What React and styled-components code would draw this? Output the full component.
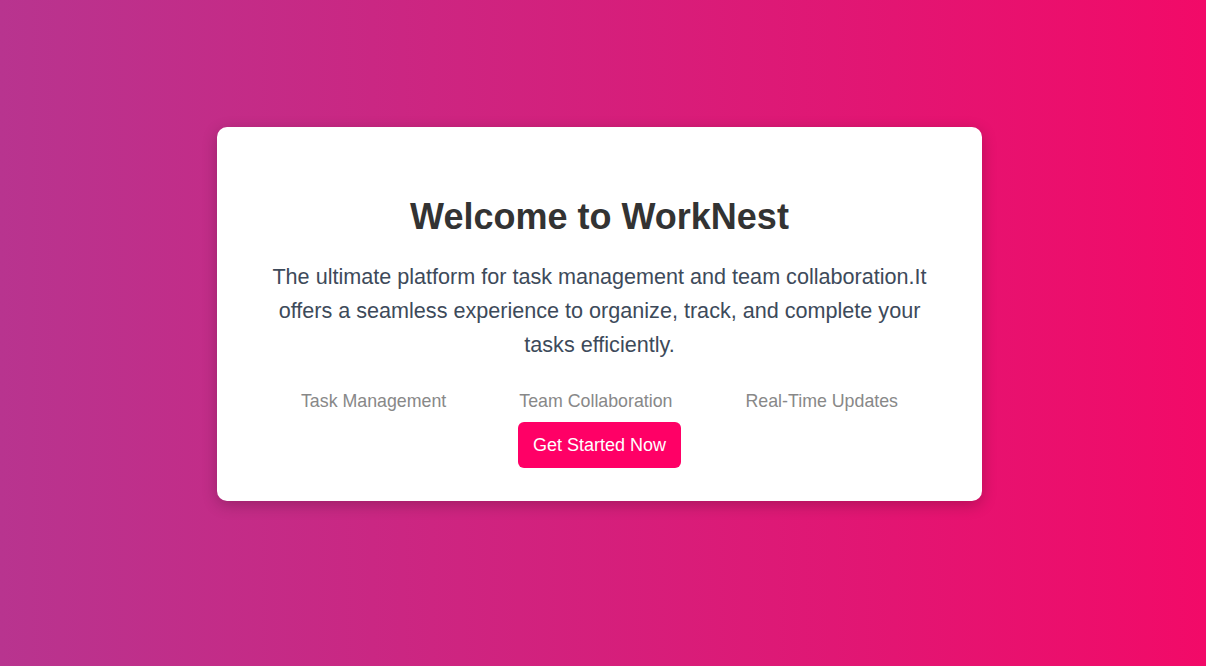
import React from "react"
import styled, { createGlobalStyle } from "styled-components"

const GlobalStyle = createGlobalStyle`
  html, body {
    margin: 0;
    padding: 0;
  }
  body {
    font-family: "Liberation Sans", Arial, sans-serif;
  }
`

const Page = styled.div`
  min-height: 100vh;
  box-sizing: border-box;
  display: flex;
  justify-content: center;
  align-items: flex-start;
  padding: 127px 7px 0 0;
  background: linear-gradient(to right, #b8348f, #f20a68);
`

const Card = styled.div`
  width: 765px;
  box-sizing: border-box;
  padding: 69px 40px 33px;
  background: #fff;
  border-radius: 10px;
  box-shadow: 0 4px 15px rgba(0, 0, 0, 0.22);
  text-align: center;
  display: flex;
  flex-direction: column;
  align-items: center;
`

const Title = styled.h1`
  margin: 0 0 22px;
  font-size: 36px;
  font-weight: bold;
  color: #333;
`

const Intro = styled.p`
  margin: 0 0 29px;
  font-size: 21.6px;
  line-height: 34px;
  color: #3d4a5a;
`

const Features = styled.div`
  display: flex;
  justify-content: center;
  gap: 73px;
  margin-bottom: 10px;
`

const Feature = styled.span`
  font-size: 17.8px;
  color: #888;
`

const CTA = styled.button`
  font-family: inherit;
  font-size: 18px;
  line-height: 22px;
  padding: 12px 15px;
  border: none;
  border-radius: 6px;
  background: #ff0066;
  color: #fff;
  cursor: pointer;
`

const features = ["Task Management", "Team Collaboration", "Real-Time Updates"]

export default function App() {
  return (
    <>
      <GlobalStyle />
      <Page>
        <Card>
          <Title>Welcome to WorkNest</Title>
          <Intro>
            The ultimate platform for task management and team collaboration.It
            offers a seamless experience to organize, track, and complete your
            tasks efficiently.
          </Intro>
          <Features>
            {features.map((f) => (
              <Feature key={f}>{f}</Feature>
            ))}
          </Features>
          <CTA>Get Started Now</CTA>
        </Card>
      </Page>
    </>
  )
}
